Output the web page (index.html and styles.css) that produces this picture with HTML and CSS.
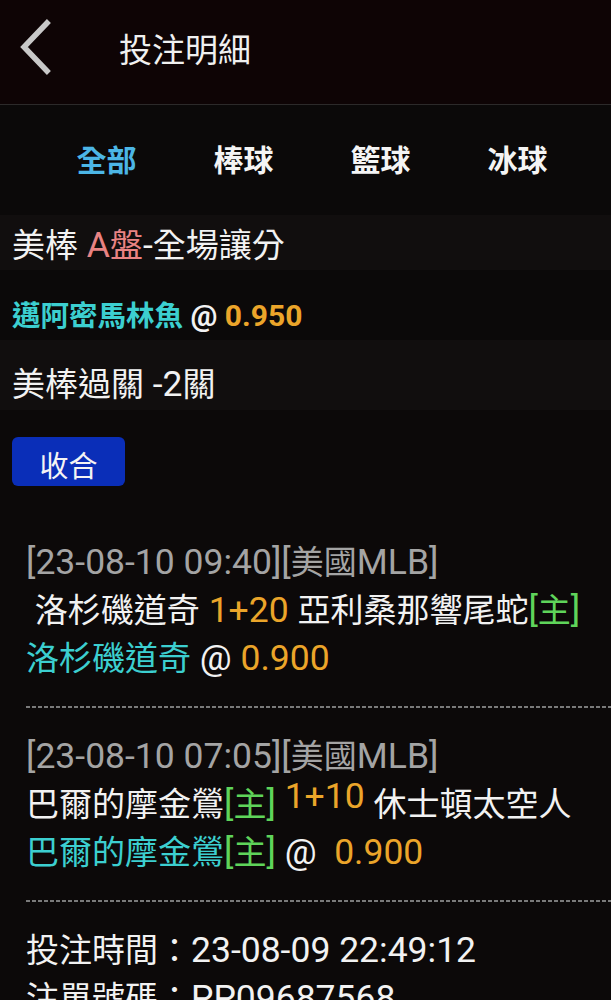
FILE: index.html
```html
<!DOCTYPE html>
<html lang="zh-Hant">
<head>
<meta charset="utf-8">
<title>投注明細</title>
<link rel="stylesheet" href="styles.css">
</head>
<body>
<header class="topbar">
  <span class="back">
    <svg width="40" height="60" viewBox="0 0 40 60"><polyline points="30,5 7,29 30,53" fill="none" stroke="#c8c8c8" stroke-width="5.5" stroke-linecap="square"/></svg>
  </span>
  <h1 class="title">投注明細</h1>
</header>
<nav class="tabs">
  <span class="tab active">全部</span>
  <span class="tab">棒球</span>
  <span class="tab">籃球</span>
  <span class="tab">冰球</span>
</nav>
<div class="row row-1">美棒<span class="lt"> </span><span class="pink"><span class="lt">A</span>盤</span><span class="lt">-</span>全場讓分</div>
<div class="row row-2"><span class="cyan">邁阿密馬林魚</span><span class="lt"> @ </span><span class="orange lt">0.950</span></div>
<div class="row row-3">美棒過關<span class="lt"> -2</span>關</div>
<div class="btn-wrap"><button class="btn">收合</button></div>
<section class="details">
  <div class="bet">
    <div class="line gray"><span class="lt">[23-08-10 09:40][</span>美國<span class="lt">MLB]</span></div>
    <div class="line"><span class="lt">&nbsp;</span>洛杉磯道奇<span class="lt"> </span><span class="orange lt">1+20</span><span class="lt"> </span>亞利桑那響尾蛇<span class="green"><span class="lt">[</span>主<span class="lt">]</span></span></div>
    <div class="line"><span class="cyan">洛杉磯道奇</span><span class="lt"> @ </span><span class="orange lt">0.900</span></div>
  </div>
  <div class="dash"></div>
  <div class="bet">
    <div class="line gray"><span class="lt">[23-08-10 07:05][</span>美國<span class="lt">MLB]</span></div>
    <div class="line">巴爾的摩金鶯<span class="green"><span class="lt">[</span>主<span class="lt">]</span></span><span class="lt"> </span><span class="orange lt raised">1+10</span><span class="lt"> </span>休士頓太空人</div>
    <div class="line"><span class="cyan">巴爾的摩金鶯</span><span class="green"><span class="lt">[</span>主<span class="lt">]</span></span><span class="lt"> @&nbsp; </span><span class="orange lt">0.900</span></div>
  </div>
  <div class="dash"></div>
  <div class="summary">
    <div class="line">投注時間：<span class="lt">23-08-09 22:49:12</span></div>
    <div class="line">注單號碼：<span class="lt">PP09687568</span></div>
  </div>
</section>
</body>
</html>
```
FILE: styles.css
```css
* { box-sizing: border-box; }
html, body {
  margin: 0;
  padding: 0;
  background: #0c0909;
  color: #f2f2f2;
  font-family: Roboto, "Noto Sans CJK TC", "Noto Sans", sans-serif;
  overflow: hidden;
}
.topbar {
  height: 105px;
  background: #0e0405;
  border-bottom: 1px solid #2c2a2a;
  display: flex;
  align-items: center;
  padding-bottom: 8px;
}
.back {
  width: 119px;
  padding-left: 17px;
  display: flex;
  align-items: center;
}
.title {
  margin: 0;
  font-size: 33px;
  font-weight: 400;
  color: #f0f0f0;
}
.tabs {
  height: 110px;
  background: #0b0909;
  display: grid;
  grid-template-columns: repeat(4, 137px);
  padding-left: 38px;
  padding-bottom: 4px;
  align-items: center;
}
.tab {
  text-align: center;
  font-size: 30px;
  font-weight: 700;
  color: #f4f4f4;
}
.tab.active { color: #4cb6e6; }
.row {
  padding-left: 12px;
  font-size: 33px;
  line-height: 40px;
  white-space: nowrap;
}
.row .lt { font-size: 35.5px; }
.row-1 { height: 55px; padding-top: 10px; background: #110e0e; }
.row-2 {
  height: 70px;
  padding-top: 26px;
  background: #0b0909;
  font-size: 28.5px;
  font-weight: 700;
}
.row-2 .lt { font-size: 30px; }
.row-3 { height: 70px; padding-top: 24px; background: #110e0e; }
.pink { color: #e98383; }
.cyan { color: #3ccfd0; }
.orange { color: #eba52a; }
.green { color: #5fd45a; }
.gray { color: #a4a4a4; }
.btn-wrap { padding: 27px 0 0 12px; }
.btn {
  width: 113px;
  height: 49px;
  border: none;
  border-radius: 6px;
  background: #0a2eb8;
  color: #f4f4f4;
  font-family: inherit;
  font-size: 29px;
  padding: 5px 0 0 0;
}
.details {
  margin-left: 26px;
  padding-top: 28px;
}
.bet { padding: 24px 0 24px; }
.line {
  font-size: 33px;
  line-height: 48px;
  height: 48px;
  white-space: nowrap;
}
.lt { font-size: 35.5px; }
.raised {
  vertical-align: 8px;
  line-height: 0;
}
.dash {
  height: 2px;
  background: repeating-linear-gradient(to right, #7a7a7a 0 4px, transparent 4px 6px);
}
.summary { padding-top: 24px; }
```
